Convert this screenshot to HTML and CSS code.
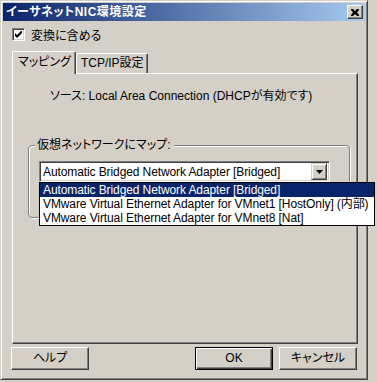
FILE: index.html
```html
<!DOCTYPE html>
<html>
<head>
  <meta charset="utf-8">
  <title>イーサネットNIC環境設定</title>
  <link rel="stylesheet" href="styles.css">
</head>
<body>
  <div class="window">
    <div class="titlebar">
      <span class="title">イーサネットNIC環境設定</span>
      <span class="close">
        <svg width="8" height="7" viewBox="0 0 8 7"><path d="M0 0h2l2 2 2-2h2v1l-2 2.5 2 2.5v1h-2l-2-2-2 2h-2v-1l2-2.5-2-2.5z" fill="#000"/></svg>
      </span>
    </div>
    <div class="content">
      <div class="check-row">
        <span class="checkbox">
          <svg width="7" height="7" viewBox="0 0 7 7"><path d="M0 2v3l2 2 5-5v-3l-5 5z" fill="#000"/></svg>
        </span>
        <span>変換に含める</span>
      </div>
      <div class="tabs">
        <div class="tab active">マッピング</div>
        <div class="tab">TCP/IP設定</div>
      </div>
      <div class="panel">
        <div class="source">ソース: Local Area Connection (DHCPが有効です)</div>
        <div class="group">
          <div class="legend">仮想ネットワークにマップ:</div>
          <div class="combo">
            <span class="combo-text">Automatic Bridged Network Adapter [Bridged]</span>
            <span class="combo-btn">
              <svg width="7" height="4" viewBox="0 0 7 4"><path d="M0 0h7l-3.5 4z" fill="#000"/></svg>
            </span>
          </div>
          <div class="droplist">
            <div class="item selected">Automatic Bridged Network Adapter [Bridged]</div>
            <div class="item">VMware Virtual Ethernet Adapter for VMnet1 [HostOnly] (内部)</div>
            <div class="item">VMware Virtual Ethernet Adapter for VMnet8 [Nat]</div>
          </div>
        </div>
      </div>
      <div class="buttons">
        <div class="btn">ヘルプ</div>
        <div class="spacer"></div>
        <div class="btn default">OK</div>
        <div class="btn">キャンセル</div>
      </div>
    </div>
  </div>
</body>
</html>
```

FILE: styles.css
```css
html, body {
  margin: 0;
  background: #d4d0c8;
}
body {
  font-family: "Liberation Sans", "Noto Sans CJK JP", sans-serif;
  font-size: 12px;
  font-feature-settings: "palt";
  color: #000;
  width: 377px;
  height: 382px;
  overflow: hidden;
}
.window {
  width: 368px;
  height: 380px;
  box-sizing: border-box;
  border-top: 1px solid #d4d0c8;
  border-left: 1px solid #d4d0c8;
  border-right: 1px solid #404040;
  border-bottom: 1px solid #404040;
  box-shadow: inset 1px 1px 0 #fff, inset -1px -1px 0 #808080;
  padding: 2px;
  position: relative;
}
.titlebar {
  height: 18px;
  background: linear-gradient(to right, #0a246a, #a6caf0);
  display: flex;
  align-items: center;
  padding: 0 2px 0 3px;
}
.title {
  color: #fff;
  font-weight: bold;
  flex: 1;
  line-height: 18px;
  letter-spacing: 0.5px;
}
.close {
  width: 16px;
  height: 14px;
  box-sizing: border-box;
  background: #d4d0c8;
  border-top: 1px solid #fff;
  border-left: 1px solid #fff;
  border-right: 1px solid #404040;
  border-bottom: 1px solid #404040;
  box-shadow: inset -1px -1px 0 #808080;
  display: flex;
  align-items: center;
  justify-content: center;
}
.content {
  padding: 0 8px 0 8px;
}
.check-row {
  display: flex;
  align-items: center;
  gap: 6px;
  margin: 7px 0 0 1px;
  height: 13px;
}
.checkbox {
  width: 13px;
  height: 13px;
  box-sizing: border-box;
  background: #fff;
  border-top: 1px solid #808080;
  border-left: 1px solid #808080;
  border-right: 1px solid #fff;
  border-bottom: 1px solid #fff;
  box-shadow: inset 1px 1px 0 #404040, inset -1px -1px 0 #d4d0c8;
  display: flex;
  align-items: center;
  justify-content: center;
}
.tabs {
  display: flex;
  align-items: flex-end;
  margin: 10px 0 0 1px;
  height: 22px;
}
.tab {
  height: 20px;
  box-sizing: border-box;
  padding: 0 3px 0 4px;
  line-height: 18px;
  border-top: 1px solid #fff;
  border-left: 1px solid #fff;
  border-right: 1px solid #404040;
  box-shadow: inset -1px 0 0 #808080;
  border-radius: 2px 2px 0 0;
}
.tab.active {
  height: 23px;
  margin-bottom: -1px;
  padding: 0 4px 0 5px;
  line-height: 20px;
  background: #d4d0c8;
  position: relative;
  z-index: 1;
}
.panel {
  margin-left: 1px;
  width: 346px;
  height: 271px;
  box-sizing: border-box;
  border-top: 1px solid #fff;
  border-left: 1px solid #fff;
  border-right: 1px solid #404040;
  border-bottom: 1px solid #404040;
  box-shadow: inset -1px -1px 0 #808080;
  padding: 15px 0 0 37px;
}
.source {
  line-height: 14px;
}
.group {
  margin: 42px 0 0 -22px;
  width: 322px;
  height: 73px;
  box-sizing: border-box;
  border: 1px solid #808080;
  border-radius: 4px;
  box-shadow: 1px 1px 0 #fff, inset 1px 1px 0 #fff;
  position: relative;
  padding: 15px 0 0 10px;
}
.legend {
  position: absolute;
  top: -8px;
  left: 6px;
  background: #d4d0c8;
  padding: 0 3px 0 2px;
  line-height: 14px;
}
.combo {
  width: 291px;
  height: 21px;
  box-sizing: border-box;
  background: #fff;
  border-top: 1px solid #808080;
  border-left: 1px solid #808080;
  border-right: 1px solid #fff;
  border-bottom: 1px solid #fff;
  box-shadow: inset 1px 1px 0 #404040, inset -1px -1px 0 #d4d0c8;
  display: flex;
  align-items: center;
  padding: 1px 2px 1px 3px;
}
.combo-text {
  flex: 1;
  letter-spacing: -0.1px;
}
.combo-btn {
  width: 16px;
  height: 17px;
  box-sizing: border-box;
  background: #d4d0c8;
  border-top: 1px solid #d4d0c8;
  border-left: 1px solid #d4d0c8;
  border-right: 1px solid #404040;
  border-bottom: 1px solid #404040;
  box-shadow: inset 1px 1px 0 #fff, inset -1px -1px 0 #808080;
  display: flex;
  align-items: center;
  justify-content: center;
}
.droplist {
  position: absolute;
  left: 10px;
  top: 36px;
  width: 334px;
  background: #fff;
  border: 1px solid #000;
  z-index: 2;
}
.item {
  height: 14px;
  line-height: 14px;
  padding: 0 3px;
  white-space: nowrap;
  letter-spacing: -0.1px;
}
.item.selected {
  background: #0a246a;
  color: #fff;
}
.buttons {
  display: flex;
  margin-top: 3px;
  gap: 6px;
}
.spacer {
  flex: 1;
}
.btn {
  width: 78px;
  height: 23px;
  box-sizing: border-box;
  border-top: 1px solid #fff;
  border-left: 1px solid #fff;
  border-right: 1px solid #404040;
  border-bottom: 1px solid #404040;
  box-shadow: inset -1px -1px 0 #808080;
  text-align: center;
  line-height: 20px;
}
.btn.default {
  border: 1px solid #000;
  box-shadow: inset 1px 1px 0 #fff, inset -1px -1px 0 #404040, inset -2px -2px 0 #808080;
}
```
